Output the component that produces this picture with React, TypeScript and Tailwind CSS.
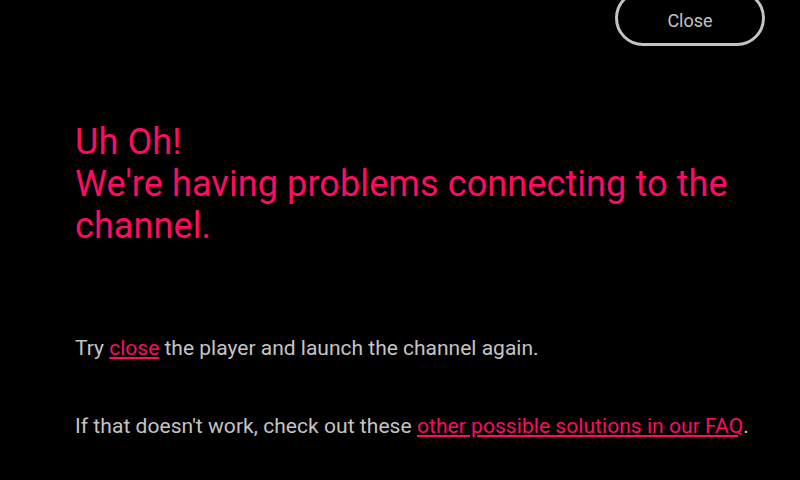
import React from "react";

export default function App() {
  return (
    <div
      className="relative w-[800px] h-[480px] bg-black overflow-hidden"
      style={{ fontFamily: "Roboto, 'Noto Sans', sans-serif" }}
    >
      <button className="absolute left-[615px] top-[-10px] w-[150px] h-[56px] rounded-full border-[3px] border-[#c4c4c4] text-[#c4c4c4] text-[18px] flex items-center justify-center pt-[4px]">
        Close
      </button>
      <div className="pl-[75px] pr-[40px] pt-[121px]">
        <h1 className="text-[36px] leading-[42px] text-[#ff0a64] font-normal tracking-[0.1px]">
          Uh Oh!
          <br />
          We're having problems connecting to the channel.
        </h1>
        <p className="mt-[87px] text-[21px] leading-[28px] text-[#c4c4c4]">
          Try{" "}
          <a href="#" className="text-[#ff0a64] underline">
            close
          </a>{" "}
          the player and launch the channel again.
        </p>
        <p className="mt-[50px] text-[21px] leading-[28px] text-[#c4c4c4] tracking-[0.05px]">
          If that doesn't work, check out these{" "}
          <a href="#" className="text-[#ff0a64] underline">
            other possible solutions in our FAQ
          </a>
          .
        </p>
      </div>
    </div>
  );
}
